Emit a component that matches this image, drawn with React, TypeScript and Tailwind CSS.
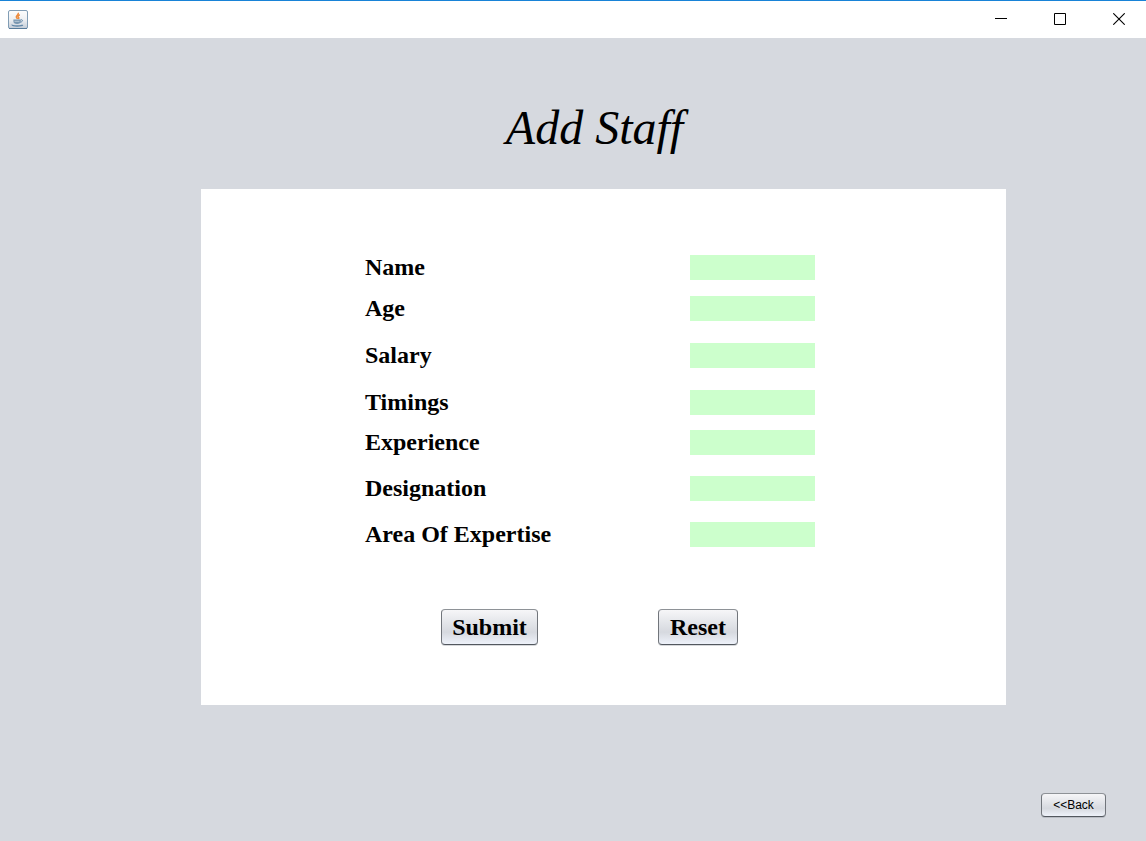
import { useState } from "react";

type Field = { id: string; label: string; spacing: string };

const fields: Field[] = [
  { id: "name", label: "Name", spacing: "" },
  { id: "age", label: "Age", spacing: "mt-4" },
  { id: "salary", label: "Salary", spacing: "mt-[22px]" },
  { id: "timings", label: "Timings", spacing: "mt-[22px]" },
  { id: "experience", label: "Experience", spacing: "mt-[15px]" },
  { id: "designation", label: "Designation", spacing: "mt-[21px]" },
  { id: "expertise", label: "Area Of Expertise", spacing: "mt-[21px]" },
];

const buttonLook =
  "rounded-[4px] border border-[#8e9297] border-x-[#71757b] border-b-[#53585f] bg-linear-to-b from-[#f6f6f8] via-[#d6d9df] via-65% to-[#eef2fa] text-black shadow-[0_1px_0_rgba(120,125,135,0.3)]";

function JavaIcon() {
  return (
    <svg width="20" height="20" viewBox="0 0 20 20" fill="none" aria-hidden="true">
      <defs>
        <linearGradient id="tile" x1="0" y1="0" x2="0" y2="1">
          <stop offset="0" stopColor="#fdfdfd" />
          <stop offset="0.5" stopColor="#eef0f3" />
          <stop offset="1" stopColor="#c3ccd7" />
        </linearGradient>
      </defs>
      <rect x="0.5" y="0.5" width="19" height="18" rx="1.5" fill="url(#tile)" stroke="#819db5" />
      <path d="M1 18.5h18" stroke="#577b9b" />
      <path d="M10.3 2.8c.7 2.1-2.8 2.7-1.9 4.5.3.6.9 1 1 1.6M11.8 4.8c-2.3 1-2.1 1.8-1.2 2.7.6.6.1 1-.4 1.4" stroke="#ed8b3d" strokeWidth="1.5" />
      <path d="M5.4 9.5h7.4v1.8c0 1.8-1.2 2.6-3.7 2.6s-3.7-.8-3.7-2.6z" fill="#7896b0" />
      <path d="M6.5 11.3h5" stroke="#c9d6e1" strokeWidth="0.8" />
      <path d="M12.8 9.8c2.2-.5 2.5 1.7-.4 2.5" stroke="#5f86a8" />
      <path d="M4.3 14.7c-1 1.6 9.5 1.8 10.4.2" stroke="#6489a9" strokeWidth="1.4" />
    </svg>
  );
}

function TitleBar() {
  return (
    <header className="flex h-[38px] items-center justify-between border-t border-[#1883d7] bg-white pl-2">
      <JavaIcon />
      <div className="flex gap-[5px] self-stretch pb-[2px]">
        <button type="button" aria-label="Minimize" className="flex w-[54px] items-center justify-center">
          <svg width="12" height="12" viewBox="0 0 12 12" stroke="black" fill="none"><path d="M0 5.5h12" /></svg>
        </button>
        <button type="button" aria-label="Maximize" className="flex w-[54px] items-center justify-center">
          <svg width="12" height="12" viewBox="0 0 12 12" stroke="black" fill="none"><path d="M.5.5h11v11H.5z" /></svg>
        </button>
        <button type="button" aria-label="Close" className="flex w-[54px] items-center justify-center">
          <svg width="12" height="12" viewBox="0 0 12 12" stroke="black" strokeWidth="1.1" fill="none"><path d="M.3.3l11.4 11.4M11.7.3L.3 11.7" /></svg>
        </button>
      </div>
    </header>
  );
}

export default function App() {
  const [values, setValues] = useState<Record<string, string>>({});

  return (
    <div className="flex min-h-screen flex-col bg-[#d6d9df] font-['Liberation_Serif',serif] text-black">
      <TitleBar />
      <main className="flex grow flex-col pt-[62px] pr-[140px] pl-[201px]">
        <h1 className="pr-[18px] text-center text-[48px] leading-[56px] italic">Add Staff</h1>
        <form
          className="mt-[33px] bg-white pt-[66px] pb-[60px] pl-[164px] text-2xl font-bold"
          onSubmit={(event) => event.preventDefault()}
          onReset={() => setValues({})}
        >
          {fields.map((field) => (
            <div key={field.id} className={`flex h-[25px] items-center ${field.spacing}`}>
              <label htmlFor={field.id} className="w-[325px] leading-[25px]">{field.label}</label>
              <input
                id={field.id}
                type="text"
                className="h-[25px] w-[125px] bg-[#ccffcc] px-1 text-base font-normal outline-none"
                value={values[field.id] ?? ""}
                onChange={(event) => setValues({ ...values, [field.id]: event.target.value })}
              />
            </div>
          ))}
          <div className="mt-[62px] flex gap-[120px] pl-[76px]">
            <button type="submit" className={`h-9 w-[97px] ${buttonLook}`}>Submit</button>
            <button type="reset" className={`h-9 w-20 ${buttonLook}`}>Reset</button>
          </div>
        </form>
      </main>
      <footer className="flex justify-end pr-10 pb-6">
        <button type="button" className={`h-6 w-[65px] font-['Liberation_Sans',sans-serif] text-xs ${buttonLook}`}>
          &lt;&lt;Back
        </button>
      </footer>
    </div>
  );
}
